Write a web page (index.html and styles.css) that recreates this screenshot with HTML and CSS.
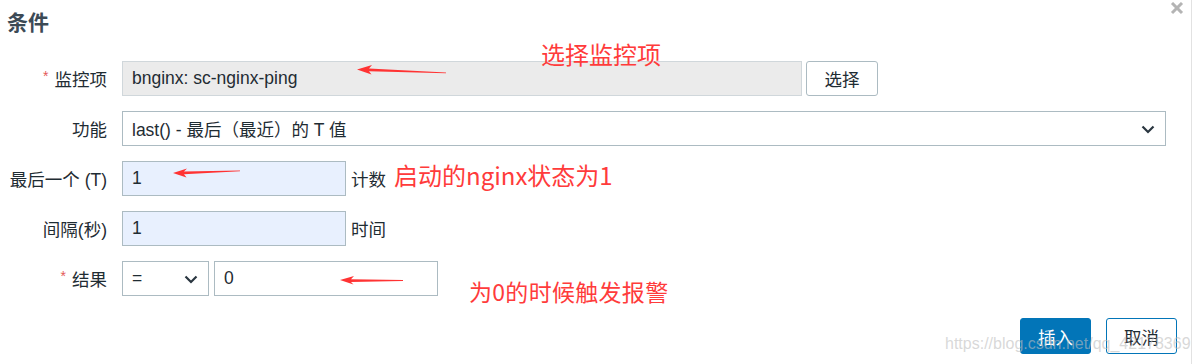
FILE: index.html
```html
<!DOCTYPE html>
<html lang="zh-CN">
<head>
<meta charset="utf-8">
<title>条件</title>
<link rel="stylesheet" href="styles.css">
</head>
<body>
<div class="dialog">
  <div class="head">
    <h2 class="title">条件</h2>
    <span class="close" aria-label="close">
      <svg width="14" height="13" viewBox="0 0 14 13"><path d="M2 1 L12 11 M12 1 L2 11" stroke="#b4b4b4" stroke-width="3" fill="none"/></svg>
    </span>
  </div>

  <div class="form">
    <div class="lbl"><span class="req">*</span>监控项</div>
    <div class="field">
      <div class="box ro wide">bnginx: sc-nginx-ping</div>
      <div class="btn">选择</div>
    </div>

    <div class="lbl">功能</div>
    <div class="field">
      <div class="box sel full">last() - 最后（最近）的 T 值
        <svg class="chev" width="14" height="9" viewBox="0 0 14 9"><path d="M1.5 1.5 L7 7 L12.5 1.5" stroke="#2a3640" stroke-width="2.2" fill="none"/></svg>
      </div>
    </div>

    <div class="lbl">最后一个 (T)</div>
    <div class="field">
      <div class="box blue num">1</div>
      <span class="suffix">计数</span>
    </div>

    <div class="lbl">间隔(秒)</div>
    <div class="field">
      <div class="box blue num">1</div>
      <span class="suffix">时间</span>
    </div>

    <div class="lbl"><span class="req">*</span>结果</div>
    <div class="field">
      <div class="box sel op">=
        <svg class="chev" width="14" height="9" viewBox="0 0 14 9"><path d="M1.5 1.5 L7 7 L12.5 1.5" stroke="#2a3640" stroke-width="2.2" fill="none"/></svg>
      </div>
      <div class="box num">0</div>
    </div>
  </div>

  <div class="footer">
    <div class="btn primary">插入</div>
    <div class="btn alt">取消</div>
  </div>

  <div class="note n1">选择监控项</div>
  <div class="note n2">启动的nginx状态为1</div>
  <div class="note n3">为0的时候触发报警</div>

  <svg class="arrows" width="1197" height="364" viewBox="0 0 1197 364">
    <path d="M357 69.5 L372 65 L369 68.6 L446 72.4 L446 73.3 L369 71.2 L371.5 74.6 Z" fill="#f33"/>
    <path d="M173 173 L187 168.6 L184 171.6 L240 170.5 L240 171.3 L184 174.2 L186.5 177.6 Z" fill="#f33"/>
    <path d="M340 280 L354 276 L351 279.2 L403 280 L403 280.9 L351 281.9 L353.5 284.6 Z" fill="#f33"/>
  </svg>

  <div class="watermark">https://blog.csdn.net/qq_42178369</div>
</div>
</body>
</html>
```

FILE: styles.css
```css
* { box-sizing: border-box; }
html, body { margin: 0; padding: 0; background: #fff; }
body {
  font-family: "Liberation Sans", Arial, "Noto Sans CJK SC", sans-serif;
  font-size: 17.5px;
  color: #1f2c33;
  width: 1197px;
  height: 364px;
  overflow: hidden;
}
.dialog {
  position: relative;
  width: 1192px;
  height: 364px;
  border-right: 1px solid #e2e2e2;
}
.head {
  height: 61px;
  padding: 8px 0 0 7px;
}
.title {
  margin: 0;
  font-family: "Noto Sans CJK SC", sans-serif;
  font-size: 21px;
  line-height: 26px;
  font-weight: 700;
  color: #3c4a55;
}
.close {
  position: absolute;
  left: 1170px;
  top: -1px;
}
.form {
  display: grid;
  grid-template-columns: 107px 1044px;
  column-gap: 15px;
  row-gap: 15px;
}
.lbl {
  height: 35px;
  display: flex;
  align-items: center;
  justify-content: flex-end;
  white-space: nowrap;
}
.req {
  color: #e45959;
  font-size: 14px;
  margin-right: 6px;
  position: relative;
  top: -3px;
}
.field {
  display: flex;
  align-items: center;
  height: 35px;
  gap: 5px;
}
.box {
  position: relative;
  height: 35px;
  border: 1px solid #acbbc2;
  background: #fff;
  padding: 0 9px;
  display: flex;
  align-items: center;
  white-space: nowrap;
}
.ro {
  background: #ebebeb;
  border-color: #d0d7db;
}
.wide { width: 680px; }
.full { width: 1044px; }
.num { width: 224px; }
.blue { background: #e8f0fe; }
.op { width: 87px; }
.chev {
  position: absolute;
  right: 10px;
  top: 13px;
}
.suffix { margin-left: 0; }
.btn {
  height: 35px;
  width: 72px;
  border: 1px solid #acbbc2;
  border-radius: 3px;
  background: #fff;
  display: flex;
  align-items: center;
  justify-content: center;
  margin-left: -1px;
}
.footer {
  display: flex;
  justify-content: flex-end;
  gap: 15px;
  margin-top: 22px;
  padding-right: 14px;
}
.footer .btn { height: 36px; width: 71px; margin-left: 0; }
.primary {
  background: #0275b8;
  border-color: #0275b8;
  color: #fff;
}
.alt {
  border-color: #0275b8;
  color: #1f2c33;
}
.note {
  position: absolute;
  color: #ff3b3b;
  font-family: "Noto Sans CJK SC", sans-serif;
  white-space: nowrap;
  line-height: 1;
}
.n1 { left: 541px; top: 42px; font-size: 24px; }
.n2 { left: 394px; top: 163px; font-size: 24px; }
.n3 { left: 469px; top: 280px; font-size: 23px; letter-spacing: 0.3px; }
.arrows {
  position: absolute;
  left: 0;
  top: 0;
  pointer-events: none;
}
.watermark {
  position: absolute;
  left: 945px;
  top: 335px;
  font-size: 16px;
  color: rgba(190, 190, 190, 0.6);
  white-space: nowrap;
  pointer-events: none;
}
```
